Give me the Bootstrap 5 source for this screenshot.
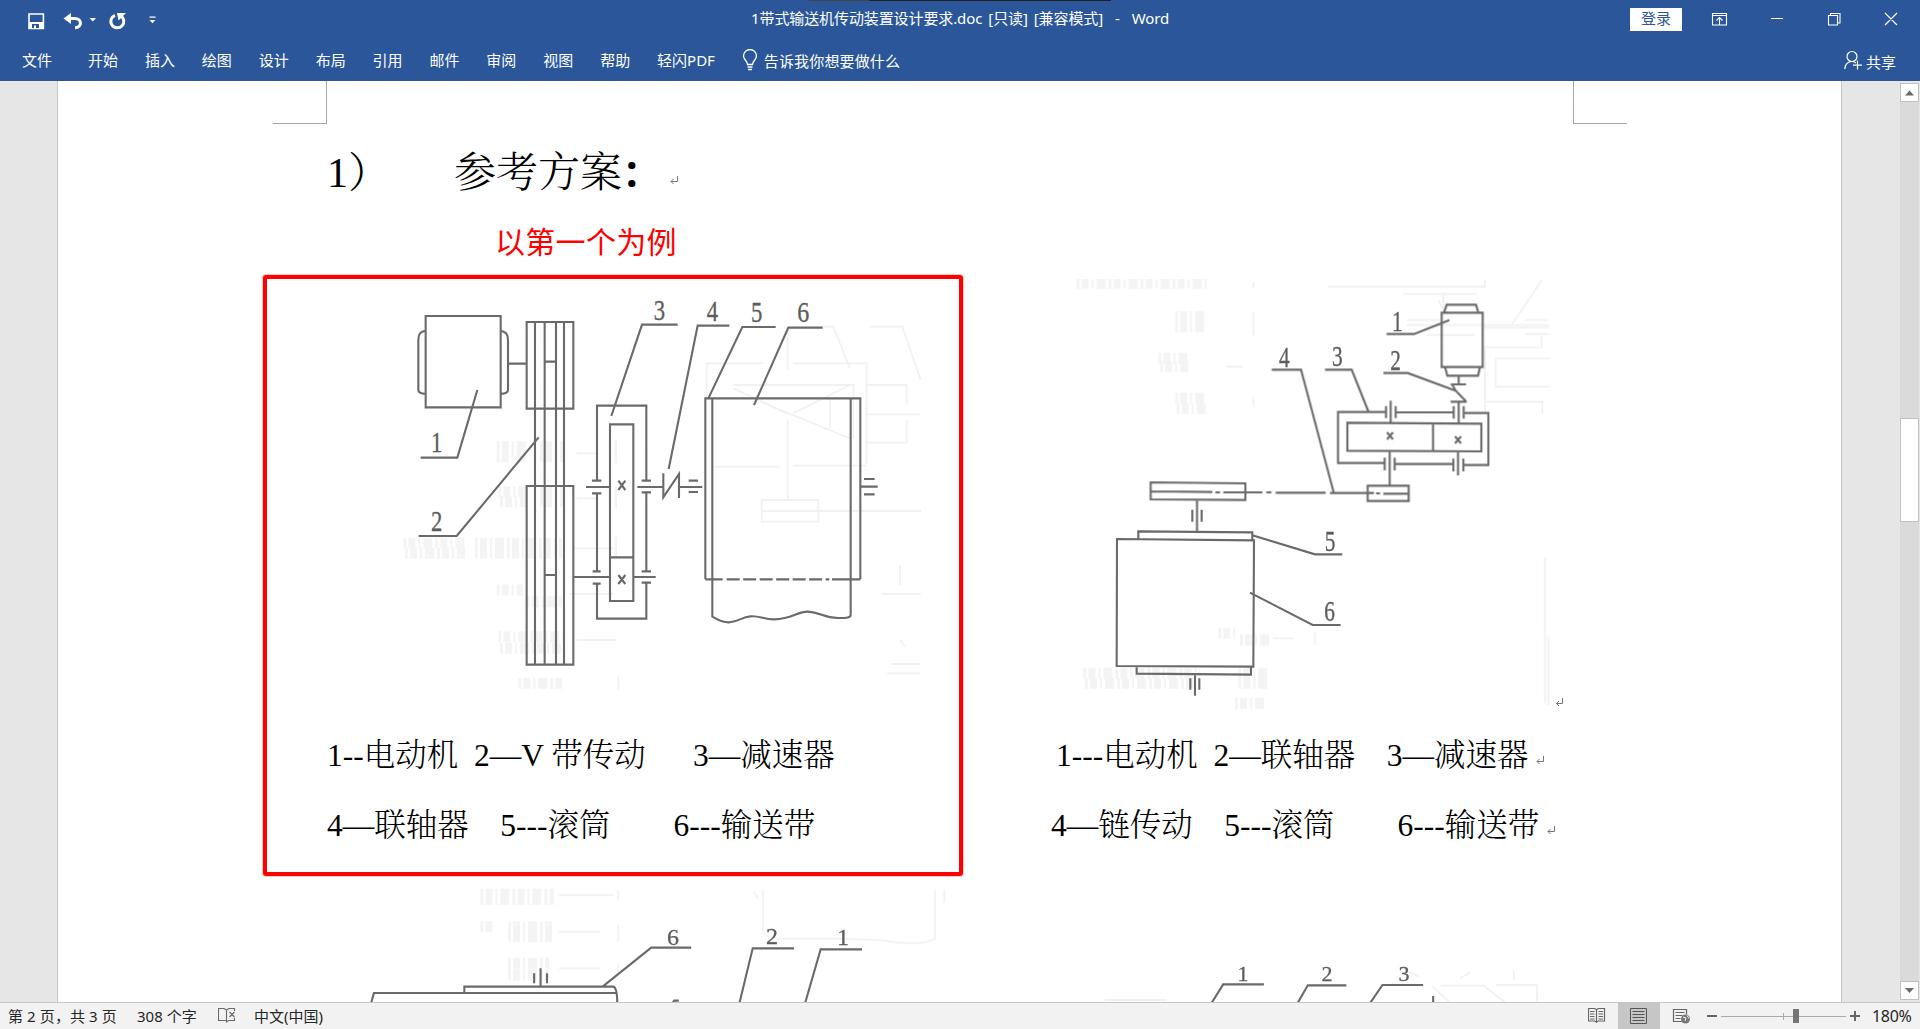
<!DOCTYPE html>
<html lang="zh-CN">
<head>
<meta charset="utf-8">
<title>1带式输送机传动装置设计要求.doc - Word</title>
<link rel="stylesheet" href="https://cdn.jsdelivr.net/npm/bootstrap@5.3.0/dist/css/bootstrap.min.css">
<style>
:root{--word:#2b579a}
body{font-family:"Noto Sans","Noto Sans CJK SC",sans-serif;font-size:15px;line-height:20px;background:#e6e6e6;color:#262626}
svg{display:block;flex:none}
.win{height:1029px}
.ribbon{background:var(--word);height:81px;color:#fff}
.strip{height:1px;width:302px;left:809px;background:linear-gradient(90deg,#444 60px,#222 60px)}
.titlebar{height:39px}
.qat{padding-left:28px;width:751px}
.doc-title{white-space:pre;width:416px;letter-spacing:-.1px;word-spacing:2.2px;padding-bottom:3px}
.login{background:#fff;color:var(--word);width:52px;height:23px;line-height:21px;margin-left:463px}
.tabs{height:42px;padding-left:22px}
.tabs .nav-link{color:#fff;padding:0;margin-right:26.900px;white-space:nowrap}
.tabs .file-tab{margin-right:36px}
.tell{letter-spacing:.15px;padding:2px 0 0 2px}
.share{margin-right:24px}
.work{height:921px}
.gutter{width:58px;border-right:1px solid #c6c6c6}
.sheet{width:1783px;background:#fff}
.gutter-r{width:59px;border-left:1px solid #c6c6c6}
.corners{margin:0 214px 0 215px;height:43px}
.corner{width:54px;border:0 solid #a6a6a6;border-bottom-width:1px}
.corner-l{border-right-width:1px}
.corner-r{border-left-width:1px}
.serif{font-family:"Liberation Serif","Noto Serif CJK SC","Noto Sans CJK SC",serif;font-weight:300;color:#000;white-space:pre}
.head{height:94px;padding:2px 0 0 269px;font-size:42px;line-height:94px;margin:0}
.head .no{width:127px}
.head .colon{width:48px;-webkit-text-stroke:2px #000}
.note{height:57px;line-height:48px;padding-left:437px;font-size:30px;letter-spacing:.3px;color:#f00}
.boxed{width:700px;height:601px;margin-left:205px;border:4px solid #f00;border-radius:3px;box-shadow:0 0 0 1px #ffc9c9}
.plain{height:601px;padding-top:4px}
.cap{font-size:31.5px;height:70px;line-height:70px;padding-left:60px}
.c2{padding-left:93px}.c3{padding-left:88px}
.ln{fill:none;stroke:#6a6a6a;stroke-width:2.1}
.ln *,.gh *{vector-effect:non-scaling-stroke}
.gh{fill:none;stroke:#f1f1f1;stroke-width:1.800;filter:blur(.5px)}
.smear{stroke:#f4f4f4;stroke-width:11;stroke-dasharray:3 2 7 3 2 3 9 3;filter:blur(1px)}
.num{font-family:"Liberation Serif",serif;font-size:90px;fill:#5c5c5c;stroke:#5c5c5c;stroke-width:1;text-anchor:middle}
.num-l{font-size:24px;stroke-width:.3}
.num-r{font-size:22px;stroke-width:.3}
.scroll{width:19px;margin:2px 1px 2px 0;background:#dadada}
.sbtn{height:19px;background:#fff;border:1px solid #c0c0c0}
.thumb{height:104px;margin-top:316px;background:#fff;border:1px solid #c0c0c0}
.status{height:27px;background:#f2f2f2;border-top:1px solid #c6c6c6;padding-left:8px}
.pages{width:129px;letter-spacing:.1px}
.words{width:81px}
.zoom-pct{width:48px;font-size:16px;letter-spacing:-.3px}
.view-on{width:42px;height:26px;background:#c6c6c6}
</style>
<script src="https://cdn.jsdelivr.net/npm/bootstrap@5.3.0/dist/js/bootstrap.bundle.min.js"></script>
</head>
<body>
<div class="win d-flex flex-column overflow-hidden">
<header class="ribbon position-relative">
  <div class="strip position-absolute top-0"></div>
  <div class="titlebar d-flex align-items-center">
    <div class="qat d-flex align-items-center">
      <svg width="130" height="39" viewBox="28 0 130 39">
        <path fill="none" stroke="#fff" stroke-width="1.6" d="M29 14h14.400v14.400H29z"/><path fill="#fff" d="M29 22h15v7H29z"/><path fill="#2b579a" d="M32 24h7v4h-3v-2.500h-2V28h-2z"/>
        <path fill="none" stroke="#fff" stroke-width="3" d="M66 18.500h9c7 0 7.500 9 0 9.300"/><path fill="#fff" d="M63.500 18.500l7.500-5.500v11z"/>
        <path fill="#fff" d="M89.500 18h6.500l-3.200 3.500z"/>
        <path fill="none" stroke="#fff" stroke-width="3" d="M115 15.300a6.500 6.500 0 1 0 5.500.4"/><path fill="#fff" d="M117 13h9l-7.500 7.500z"/>
        <path fill="#fff" d="M149.500 16.500h6v1.300h-6zM149.500 20h6l-3 3.200z"/>
      </svg>
    </div>
    <div class="doc-title">1带式输送机传动装置设计要求.doc [只读] [兼容模式]  -  Word</div>
    <div class="login text-center">登录</div>
    <svg width="238" height="39" viewBox="1682 0 238 39" fill="none" stroke="#fff" stroke-width="1.100">
      <path d="M1712.500 13.500h14v11.500h-14zM1712.500 15.500h14M1719.500 25v-7M1716.500 20.500l3-3 3 3M1771 18.500h12M1828.500 15.500h9v9.500h-9zM1830.500 15.500v-2h9.500v9.500h-2.500M1885 13l12 12M1897 13l-12 12"/>
    </svg>
  </div>
  <div class="d-flex align-items-center">
    <nav class="nav tabs align-items-center flex-nowrap">
      <a class="nav-link file-tab">文件</a><a class="nav-link">开始</a><a class="nav-link">插入</a><a class="nav-link">绘图</a><a class="nav-link">设计</a><a class="nav-link">布局</a><a class="nav-link">引用</a><a class="nav-link">邮件</a><a class="nav-link">审阅</a><a class="nav-link">视图</a><a class="nav-link">帮助</a><a class="nav-link">轻闪PDF</a>
      <svg width="20" height="22" viewBox="0 0 20 22" fill="none" stroke="#fff" stroke-width="1.300"><path d="M5.500 15.500c0-3.500-4-5-4-8.500a6.500 6.500 0 0 1 13 0c0 3.500-4 5-4 8.500zM5.500 18h5M6 20.500h4"/></svg>
      <span class="tell text-nowrap">告诉我你想要做什么</span>
    </nav>
    <div class="share d-flex align-items-center ms-auto">
      <svg width="22" height="20" viewBox="0 0 22 20" fill="none" stroke="#fff" stroke-width="1.200"><circle cx="8" cy="6.500" r="5"/><path d="M.8 19c0-4.500 3-7.500 7-7.500 1.500 0 3 .4 4 1.500M13.500 10.500v9M9 15.200h9"/></svg>
      <span class="pt-1">共享</span>
    </div>
  </div>
</header>

<main class="work d-flex">
  <div class="gutter flex-shrink-0"></div>
  <section class="sheet flex-shrink-0 overflow-hidden">
    <div class="corners d-flex justify-content-between"><div class="corner corner-l"></div><div class="corner corner-r"></div></div>
    <h1 class="head serif d-flex"><span class="no">1）</span><span>参考方案</span><b class="colon">：</b><svg class="align-self-center mt-3" width="8" height="9" fill="none" stroke="#777"><path d="M7.500 0v5.500H1M3.500 3L1 5.500 3.500 8"/></svg></h1>
    <div class="note">以第一个为例</div>
    <div class="d-flex">
      <div class="boxed flex-shrink-0">
        <svg width="692" height="442" viewBox="267 279 692 442">
          <g class="gh" transform="translate(640 270) scale(.33333)"><path d="M200 390V280h170M460 280h220v300M680 345h120v60M680 433h162M800 450v68H680M280 345h360v160M280 355l160 75M385 405l245 100M460 430l170-85M443 180v120M443 450v240M220 590h200M460 587h220M365 690h170v65H365zM365 723h478M690 170h97l55 160M550 170h30l50 125M725 972h117M755 1182h88M780 885v60M570 385v90M740 1210h100M780 1110l15 20"/></g>
          <g class="gh" transform="translate(380 270) scale(.33333)"><path class="smear" d="M350 530h90M480 530h70M350 560h90M480 560h70M355 665h85M480 665h70M360 695h80M480 695h70M70 820h190M285 820h260M75 850h180M285 850h260M350 960h80M440 995h105M355 1100h200M360 1135h190M415 1240h140"/><path d="M590 550h60M590 685h60M580 835h120M570 972h130M590 1110h120M708 510v70M708 650v65M708 800v60M715 1220v40"/></g>
          <g class="ln" transform="translate(380 270) scale(.33333)">
            <path d="M137 138h225v274H137zM137 182c-18 3-22 12-22 30v148q0 10 22 12M362 182c18 4 22 12 22 30v148q0 10-22 12M384 281h56M440 156h140v260H440zM440 648h140v536H440zM465 156v1028M494 156v1028M528 156v1028M552 156v1028M494 275h34M494 915h34M292 360l-60 203H122M476 502L230 798H116M694 438l92-274h107M651 632V407h148v225M651 670v233M799 667v235M651 943v103h148V940M690 463h70v530h-70zM690 862h70M618 651h72M772 651h78M636 632h28M636 670h28M785 632h28M785 667h28M582 921h108M760 921h67M638 904h24M638 941h24M785 904h28M785 938h28M850 610v72l47-70v72M897 651h70M926 632h28M926 666h28M715 632l21 28M736 632l-21 28M715 915l21 27M736 915l-21 27"/>
          </g>
          <g class="ln" transform="translate(640 270) scale(.33333)">
            <path d="M268 167h-95L86 597M407 171H307L205 385M548 173H445L342 405M196 928V385h465v543M196 928h52M576 928h85M217 385v655c20 12 35 18 52 17 30-3 36-16 62-18 30-2 42 10 73 9 52-2 69-24 100-23 37 2 48 18 90 19 28 0 38-1 38-10V385M661 650h52M672 627h32M672 673h32"/><path stroke-dasharray="13 3.500" d="M260 928h308"/>
          </g>
          <g class="num" transform="translate(380 270) scale(.33333)"><text x="170" y="545" textLength="34" lengthAdjust="spacingAndGlyphs">1</text><text x="170" y="782" textLength="34" lengthAdjust="spacingAndGlyphs">2</text><text x="838" y="149" textLength="34" lengthAdjust="spacingAndGlyphs">3</text><text x="997" y="152" textLength="34" lengthAdjust="spacingAndGlyphs">4</text><text x="1130" y="155" textLength="34" lengthAdjust="spacingAndGlyphs">5</text><text x="1270" y="155" textLength="36" lengthAdjust="spacingAndGlyphs">6</text></g>
        </svg>
        <div class="cap serif">1--电动机  2—V 带传动      3—减速器</div>
        <div class="cap serif">4—联轴器    5---滚筒        6---输送带</div>
      </div>
      <div class="plain flex-shrink-0">
        <svg width="700" height="442" viewBox="963 279 700 442">
          <g class="gh" transform="translate(1060 270) scale(.33333)"><path class="smear" d="M50 40h390M345 140h95M345 170h95M295 265h90M300 290h85M345 385h95M350 415h90"/><path d="M580 35v20M580 125v70M500 290h50M580 380v30M805 50h470V30M1030 72h220M1150 75v40M1135 90l20 40M1040 150h100M1040 165h430M1355 165l92-137M1100 195h145M1275 430V232h170v-35M1467 265h-160v85h160M1275 395h172v35M1395 150h72M1395 192h72M1270 172h197"/></g>
          <g class="gh" transform="translate(1060 460) scale(.33333)"><path class="smear" d="M475 520h60M540 540h95M70 640h350M75 670h330M535 640h90M535 670h90M525 730h90"/><path d="M765 515v40M640 535h60M1455 290v440M1465 530v205"/></g>
          <g class="ln" transform="translate(1060 270) scale(.33333)">
            <path d="M1145 128h123v163h-123zM1152 128l8-24h88l7 24M1155 291l7 26h92l6-26M1196 317v26M1172 343h46M1176 343l12 20 30 31M1172 395h48M1196 395v65M980 192h82l106-42M970 309h73l143 53M795 299h80l50 125M635 299h88l98 368M977 426H834v153h140M1008 427h172M1212 429h73v156h-73M1004 582h176M862 458l402 3v83l-402-2zM1119 460v83M992 392v66M978 408v36M1007 408v36M1181 408v38M1211 408v38M989 543v104M974 563v38M1004 563v38M1194 544v72M1180 566v38M1210 566v38M981 487l18 21M999 487l-18 21M1185 499l18 21M1203 499l-18 21M923 647h123v46H923zM272 637l284 3v50l-284-2zM272 664l185 2M466 667h14M490 667h117M619 667h15M647 668h150M810 669h132M948 670h12M970 671h76M411 689v99"/>
          </g>
          <g class="ln" transform="translate(1060 460) scale(.33333)"><path d="M397 149v36M425 149v36M235 237v-23l342 3v24M171 237l411 4-2 379-410-2zM230 619v22l343 3v-23M405 643v64M391 655v34M418 655v34M577 226l188 57h82M570 398l188 97h84"/></g>
          <g class="num" transform="translate(1060 270) scale(.33333)"><text x="1012" y="182" textLength="32" lengthAdjust="spacingAndGlyphs">1</text><text x="1007" y="299" textLength="32" lengthAdjust="spacingAndGlyphs">2</text><text x="832" y="289" textLength="32" lengthAdjust="spacingAndGlyphs">3</text><text x="673" y="290" textLength="32" lengthAdjust="spacingAndGlyphs">4</text><text x="810" y="842" textLength="32" lengthAdjust="spacingAndGlyphs">5</text><text x="809" y="1053" textLength="32" lengthAdjust="spacingAndGlyphs">6</text></g>
          <path fill="none" stroke="#777" d="M1562.500 698v5.500h-6M1559 701l-2.500 2.500 2.500 2.500"/>
        </svg>
        <div class="cap c2 serif d-flex align-items-center">1---电动机  2—联轴器    3—减速器<svg class="ms-2 mt-2" width="8" height="9" fill="none" stroke="#777"><path d="M7.500 0v5.500H1M3.500 3L1 5.500 3.500 8"/></svg></div>
        <div class="cap c3 serif d-flex align-items-center">4—链传动    5---滚筒        6---输送带<svg class="ms-2 mt-2" width="8" height="9" fill="none" stroke="#777"><path d="M7.500 0v5.500H1M3.500 3L1 5.500 3.500 8"/></svg></div>
      </div>
    </div>
    <svg width="1783" height="126" viewBox="58 876 1783 126">
      <g class="gh" transform="translate(260 720) scale(.4592 .33333)"><path class="smear" d="M480 523h160M480 538h160M480 620h30M540 620h100M540 650h100M540 730h90M540 765h90"/><path d="M780 510v30M780 615v50M780 730v40M1095 508v130q10 20 60 18h120l80 5q80 20 115-5V508M1490 508v40M650 525h120M650 635h90M650 745h90M1075 515l10 20"/></g>
      <g class="gh" transform="translate(1030 720) scale(.3571 .33333)"><path d="M1060 755l30 15M1125 797l50 50M1150 797h120l60 50M1205 775l30-20M1305 795h115v50M1355 750v30M210 840h170"/></g>
      <g class="ln" transform="translate(260 720) scale(.4592 .33333)"><path d="M242 850l6-31h530M445 819v-19h325q8 4 8 50M611 745v55M597 760v30M625 760v30M746 800l106-117h87M1044 850l29-165h90M1187 850l34-162h90M898 850l4-8h10"/></g>
      <g class="ln" transform="translate(1030 720) scale(.3571 .33333)"><path d="M508 850l33-57h114M749 850l29-54h108M952 850l35-55h114M1129 828v24"/></g>
      <g class="num num-l"><text x="673" y="945" textLength="12" lengthAdjust="spacingAndGlyphs">6</text><text x="772" y="944" textLength="12" lengthAdjust="spacingAndGlyphs">2</text><text x="843" y="945" textLength="12" lengthAdjust="spacingAndGlyphs">1</text></g>
      <g class="num num-r"><text x="1243" y="981">1</text><text x="1327" y="981">2</text><text x="1404" y="981">3</text></g>
    </svg>
  </section>
  <div class="gutter-r flex-shrink-0"></div>
  <div class="scroll flex-shrink-0 d-flex flex-column">
    <div class="sbtn"><svg width="17" height="17"><path fill="#6a6a6a" d="M4 11.500h9L8.500 6.500z"/></svg></div>
    <div class="thumb"></div>
    <div class="sbtn mt-auto"><svg width="17" height="17"><path fill="#6a6a6a" d="M4 6h9l-4.500 5z"/></svg></div>
  </div>
</main>

<footer class="status d-flex align-items-center text-nowrap">
  <span class="pages">第 2 页，共 3 页</span><span class="words">308 个字</span>
  <svg width="36" height="26" fill="none" stroke="#6a6a6a" stroke-width="1.100"><path d="M8.500 17.500H.5v-12h5.500l2.500 1.500 2.500-1.500h5.500v2.500M8.500 7v12l2-1.500h6V15M11.500 9l5 5M16.500 9l-5 5"/></svg>
  <span>中文(中国)</span>
  <svg class="ms-auto" width="30" height="26" viewBox="1588 1003 30 26" fill="none" stroke="#666" stroke-width="1.200"><path d="M1588.500 1008.500h6l2 1 2-1h6v12.500h-6l-2 1-2-1h-6zM1596.500 1009v14M1590 1011.500h4.500M1590 1014h4.500M1590 1016.500h4.500M1590 1019h4.500M1598.500 1011.500h4.500M1598.500 1014h4.500M1598.500 1016.500h4.500M1598.500 1019h4.500"/></svg>
  <div class="view-on"><svg width="42" height="26" viewBox="1618 1003 42 26" fill="none" stroke="#555"><path d="M1630.500 1008.500h16v15h-16zM1632.500 1011.500h12M1632.500 1014.500h12M1632.500 1017.500h12M1632.500 1020.500h12"/></svg></div>
  <svg width="212" height="26" viewBox="1660 1003 212 26" fill="none" stroke="#666"><path stroke-width="1.200" d="M1682 1021.500h-8.500v-12h13v5M1675.500 1012.500h9M1675.500 1015.500h7M1675.500 1018.500h5"/><circle cx="1685.500" cy="1019" r="4.500" fill="#777" stroke="none"/><path stroke="#f2f2f2" d="M1683 1017l3 1-1 3M1687 1015.500l2 3"/><path stroke-width="2" d="M1707 1016h10M1850 1016h10M1855 1011v10"/><path stroke="#aaa" d="M1721 1016.500h125M1783.500 1013v7"/><path fill="#767676" stroke="none" d="M1793 1009h6v14h-6z"/></svg>
  <span class="zoom-pct">180%</span>
</footer>
</div>
</body>
</html>
